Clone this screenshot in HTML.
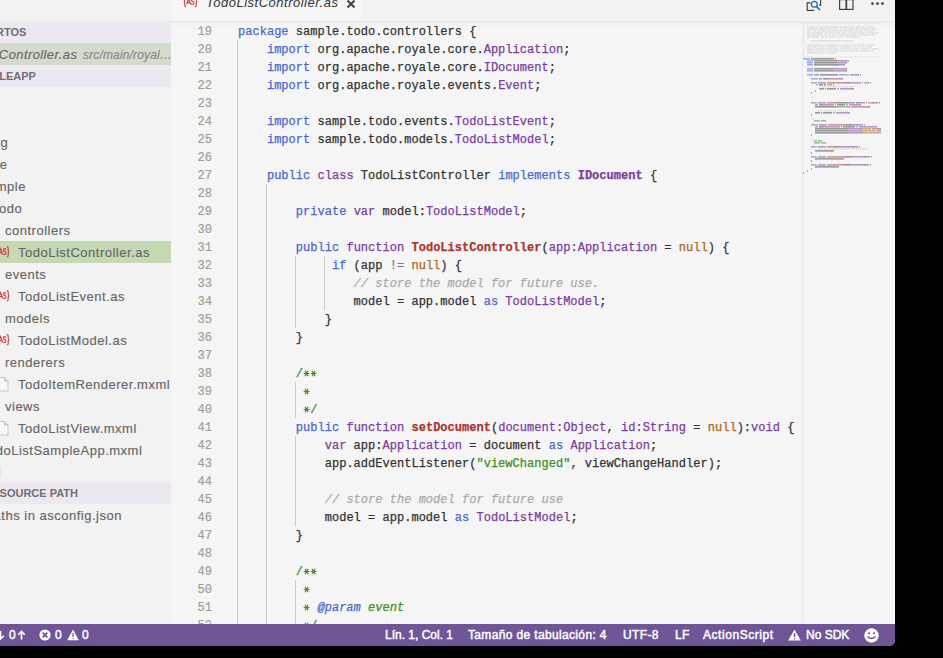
<!DOCTYPE html>
<html><head><meta charset="utf-8">
<style>
*{margin:0;padding:0;box-sizing:border-box}
html,body{width:943px;height:658px;overflow:hidden;background:#000}
body{position:relative;font-family:"Liberation Sans",sans-serif}
#win{position:absolute;left:0;top:0;width:895px;height:646px;background:#f5f5f5;overflow:hidden;border-bottom-right-radius:6px}
#side{position:absolute;left:0;top:0;width:171px;height:624px;background:#f2f2f2;overflow:hidden}
.hdr{position:absolute;left:0;width:171px;height:22px;background:#ede8ef;color:#6f6f6f;font-size:11px;font-weight:bold;line-height:22px;white-space:nowrap}
.hdr span{position:absolute;top:0}
.row{position:absolute;left:0;width:171px;height:22px;line-height:22px;font-size:13px;color:#666666;white-space:nowrap;letter-spacing:0.5px;-webkit-text-stroke:0.15px}
.row span.t{position:absolute;top:1px}
.sel{background:#c4d9b1}
.isel{background:#d3dbcd}
.ic{position:absolute}
#tabs{position:absolute;left:171px;top:0;width:724px;height:21px;background:#f2f2f2}
#tab{position:absolute;left:0;top:0;width:191px;height:21px;background:#f5f5f5}
#tabt{position:absolute;left:35px;top:-6px;font-size:13px;line-height:18px;font-style:italic;color:#333;white-space:nowrap;letter-spacing:0.5px}
#editor{position:absolute;left:171px;top:21px;width:724px;height:603px;background:#f5f5f5;overflow:hidden}
#edshadow{position:absolute;left:171px;top:21px;width:724px;height:8px;box-shadow:#dddddd 0 6px 6px -6px inset}
.ln{position:absolute;left:171px;width:41px;height:18px;line-height:18px;padding-top:1px;text-align:right;font-family:"Liberation Mono",monospace;font-size:12px;color:#9ca096;-webkit-text-stroke:0.2px}
.cl{position:absolute;left:238px;height:18px;line-height:18px;padding-top:1px;white-space:pre;font-family:"Liberation Mono",monospace;font-size:12px;color:#333333;-webkit-text-stroke:0.25px;letter-spacing:0.024px}
.ast{vertical-align:0px}
.ig{position:absolute;width:1px;background:#cacaca}
#mmline{position:absolute;left:802px;top:21px;width:1px;height:603px;background:#eaeaea}
#status{position:absolute;left:0;top:624px;width:895px;height:22px;background:#705697;color:#fff;font-size:12px;line-height:22px;white-space:nowrap;letter-spacing:0.35px;-webkit-text-stroke:0.45px #fff}
#status span{position:absolute;top:0}
#status svg{position:absolute}
#clip{position:absolute;left:0;top:0;width:895px;height:624px;overflow:hidden}
</style></head><body>
<div id="win">
<div id="clip">
<div id="tabs"><div id="tab">
<svg class="ic" style="left:12px;top:-4px" width="15" height="12" viewBox="0 0 15 12" fill="none" stroke="#cf3a42" stroke-width="1.1"><path d="M3.2,0.6 Q1.8,0.6 1.8,2 L1.8,4.6 Q1.8,5.8 0.6,5.8 Q1.8,5.8 1.8,7 L1.8,9.6 Q1.8,11 3.2,11 M3.6,8.4 L5.6,2.6 L7.6,8.4 M4.3,6.6 L6.9,6.6 M11,3.4 Q10.6,2.6 9.6,2.6 Q8.3,2.6 8.3,4 Q8.3,5.1 9.6,5.4 Q11,5.7 11,7 Q11,8.5 9.5,8.5 Q8.5,8.5 8.1,7.7 M11.8,0.6 Q13.2,0.6 13.2,2 L13.2,4.6 Q13.2,5.8 14.4,5.8 Q13.2,5.8 13.2,7 L13.2,9.6 Q13.2,11 11.8,11"/></svg>
<div id="tabt">TodoListController.as</div>
<svg class="ic" style="left:175px;top:-1px" width="10" height="10" viewBox="0 0 10 10" stroke="#424242" stroke-width="2"><path d="M1.5,1.5 L8.5,8.5 M8.5,1.5 L1.5,8.5"/></svg>
</div>
<svg class="ic" style="left:635px;top:-1px" width="16" height="13" viewBox="0 0 16 13" fill="none"><path d="M4.6,3.9 L1.2,3.9 L1.2,11.4 L8.2,11.4 M14.6,0 L14.6,6.2 L13,6.2" stroke="#424242" stroke-width="1.2"/><circle cx="8.3" cy="5.3" r="2.9" stroke="#1a6fc0" stroke-width="1.3"/><path d="M10.4,7.4 L14,11" stroke="#1a6fc0" stroke-width="1.7"/></svg>
<svg class="ic" style="left:668px;top:-1px" width="15" height="12" viewBox="0 0 15 12" fill="none" stroke="#424242" stroke-width="1.2"><rect x="0.6" y="0.6" width="13.4" height="9.8"/><path d="M7.3,0.6 L7.3,10.4" stroke-width="1.8"/></svg>
<svg class="ic" style="left:698px;top:0px" width="16" height="8" viewBox="0 0 16 8" fill="#424242"><circle cx="3.5" cy="3.6" r="1.45"/><circle cx="8.5" cy="3.6" r="1.45"/><circle cx="13.5" cy="3.6" r="1.45"/></svg>
</div>
<div id="editor"></div>
<div id="edshadow"></div>
<div id="mmline"></div>
<svg style="position:absolute;left:803px;top:22px" width="78" height="160" ><rect x="0" y="0" width="80" height="1.6" fill="#AAAAAA" fill-opacity="0.10"/><rect x="0" y="2" width="2" height="1.6" fill="#AAAAAA" fill-opacity="0.10"/><rect x="0" y="4" width="2" height="1.6" fill="#AAAAAA" fill-opacity="0.10"/><rect x="4" y="4" width="8" height="1.6" fill="#AAAAAA" fill-opacity="0.26"/><rect x="13" y="4" width="2" height="1.6" fill="#AAAAAA" fill-opacity="0.26"/><rect x="16" y="4" width="3" height="1.6" fill="#AAAAAA" fill-opacity="0.26"/><rect x="20" y="4" width="6" height="1.6" fill="#AAAAAA" fill-opacity="0.26"/><rect x="27" y="4" width="8" height="1.6" fill="#AAAAAA" fill-opacity="0.26"/><rect x="36" y="4" width="10" height="1.6" fill="#AAAAAA" fill-opacity="0.26"/><rect x="47" y="4" width="5" height="1.6" fill="#AAAAAA" fill-opacity="0.26"/><rect x="53" y="4" width="5" height="1.6" fill="#AAAAAA" fill-opacity="0.26"/><rect x="59" y="4" width="3" height="1.6" fill="#AAAAAA" fill-opacity="0.26"/><rect x="63" y="4" width="2" height="1.6" fill="#AAAAAA" fill-opacity="0.26"/><rect x="66" y="4" width="4" height="1.6" fill="#AAAAAA" fill-opacity="0.26"/><rect x="0" y="6" width="2" height="1.6" fill="#AAAAAA" fill-opacity="0.10"/><rect x="4" y="6" width="11" height="1.6" fill="#AAAAAA" fill-opacity="0.26"/><rect x="16" y="6" width="7" height="1.6" fill="#AAAAAA" fill-opacity="0.26"/><rect x="24" y="6" width="11" height="1.6" fill="#AAAAAA" fill-opacity="0.26"/><rect x="37" y="6" width="3" height="1.6" fill="#AAAAAA" fill-opacity="0.26"/><rect x="41" y="6" width="3" height="1.6" fill="#AAAAAA" fill-opacity="0.26"/><rect x="45" y="6" width="6" height="1.6" fill="#AAAAAA" fill-opacity="0.26"/><rect x="52" y="6" width="4" height="1.6" fill="#AAAAAA" fill-opacity="0.26"/><rect x="57" y="6" width="11" height="1.6" fill="#AAAAAA" fill-opacity="0.26"/><rect x="69" y="6" width="4" height="1.6" fill="#AAAAAA" fill-opacity="0.26"/><rect x="0" y="8" width="2" height="1.6" fill="#AAAAAA" fill-opacity="0.10"/><rect x="4" y="8" width="4" height="1.6" fill="#AAAAAA" fill-opacity="0.26"/><rect x="9" y="8" width="4" height="1.6" fill="#AAAAAA" fill-opacity="0.26"/><rect x="14" y="8" width="3" height="1.6" fill="#AAAAAA" fill-opacity="0.26"/><rect x="18" y="8" width="10" height="1.6" fill="#AAAAAA" fill-opacity="0.26"/><rect x="29" y="8" width="11" height="1.6" fill="#AAAAAA" fill-opacity="0.26"/><rect x="41" y="8" width="9" height="1.6" fill="#AAAAAA" fill-opacity="0.26"/><rect x="51" y="8" width="9" height="1.6" fill="#AAAAAA" fill-opacity="0.26"/><rect x="61" y="8" width="10" height="1.6" fill="#AAAAAA" fill-opacity="0.26"/><rect x="0" y="10" width="2" height="1.6" fill="#AAAAAA" fill-opacity="0.10"/><rect x="4" y="10" width="3" height="1.6" fill="#AAAAAA" fill-opacity="0.26"/><rect x="8" y="10" width="3" height="1.6" fill="#AAAAAA" fill-opacity="0.26"/><rect x="12" y="10" width="8" height="1.6" fill="#AAAAAA" fill-opacity="0.26"/><rect x="21" y="10" width="4" height="1.6" fill="#AAAAAA" fill-opacity="0.26"/><rect x="26" y="10" width="4" height="1.6" fill="#AAAAAA" fill-opacity="0.26"/><rect x="31" y="10" width="2" height="1.6" fill="#AAAAAA" fill-opacity="0.26"/><rect x="34" y="10" width="3" height="1.6" fill="#AAAAAA" fill-opacity="0.26"/><rect x="38" y="10" width="5" height="1.6" fill="#AAAAAA" fill-opacity="0.26"/><rect x="44" y="10" width="3" height="1.6" fill="#AAAAAA" fill-opacity="0.26"/><rect x="48" y="10" width="6" height="1.6" fill="#AAAAAA" fill-opacity="0.26"/><rect x="55" y="10" width="8" height="1.6" fill="#AAAAAA" fill-opacity="0.26"/><rect x="64" y="10" width="7" height="1.6" fill="#AAAAAA" fill-opacity="0.26"/><rect x="72" y="10" width="3" height="1.6" fill="#AAAAAA" fill-opacity="0.26"/><rect x="0" y="12" width="2" height="1.6" fill="#AAAAAA" fill-opacity="0.10"/><rect x="4" y="12" width="4" height="1.6" fill="#AAAAAA" fill-opacity="0.26"/><rect x="9" y="12" width="11" height="1.6" fill="#AAAAAA" fill-opacity="0.26"/><rect x="21" y="12" width="3" height="1.6" fill="#AAAAAA" fill-opacity="0.26"/><rect x="25" y="12" width="3" height="1.6" fill="#AAAAAA" fill-opacity="0.26"/><rect x="29" y="12" width="3" height="1.6" fill="#AAAAAA" fill-opacity="0.26"/><rect x="33" y="12" width="3" height="1.6" fill="#AAAAAA" fill-opacity="0.26"/><rect x="37" y="12" width="4" height="1.6" fill="#AAAAAA" fill-opacity="0.26"/><rect x="42" y="12" width="4" height="1.6" fill="#AAAAAA" fill-opacity="0.26"/><rect x="47" y="12" width="6" height="1.6" fill="#AAAAAA" fill-opacity="0.26"/><rect x="54" y="12" width="2" height="1.6" fill="#AAAAAA" fill-opacity="0.26"/><rect x="57" y="12" width="10" height="1.6" fill="#AAAAAA" fill-opacity="0.26"/><rect x="68" y="12" width="4" height="1.6" fill="#AAAAAA" fill-opacity="0.26"/><rect x="0" y="14" width="2" height="1.6" fill="#AAAAAA" fill-opacity="0.10"/><rect x="4" y="14" width="3" height="1.6" fill="#AAAAAA" fill-opacity="0.26"/><rect x="8" y="14" width="8" height="1.6" fill="#AAAAAA" fill-opacity="0.26"/><rect x="18" y="14" width="3" height="1.6" fill="#AAAAAA" fill-opacity="0.26"/><rect x="22" y="14" width="3" height="1.6" fill="#AAAAAA" fill-opacity="0.26"/><rect x="26" y="14" width="6" height="1.6" fill="#AAAAAA" fill-opacity="0.26"/><rect x="33" y="14" width="1" height="1.6" fill="#AAAAAA" fill-opacity="0.26"/><rect x="35" y="14" width="4" height="1.6" fill="#AAAAAA" fill-opacity="0.26"/><rect x="40" y="14" width="2" height="1.6" fill="#AAAAAA" fill-opacity="0.26"/><rect x="43" y="14" width="3" height="1.6" fill="#AAAAAA" fill-opacity="0.26"/><rect x="47" y="14" width="7" height="1.6" fill="#AAAAAA" fill-opacity="0.26"/><rect x="55" y="14" width="2" height="1.6" fill="#AAAAAA" fill-opacity="0.26"/><rect x="0" y="16" width="2" height="1.6" fill="#AAAAAA" fill-opacity="0.10"/><rect x="0" y="18" width="2" height="1.6" fill="#AAAAAA" fill-opacity="0.10"/><rect x="8" y="18" width="42" height="1.6" fill="#AAAAAA" fill-opacity="0.26"/><rect x="0" y="20" width="2" height="1.6" fill="#AAAAAA" fill-opacity="0.10"/><rect x="0" y="22" width="2" height="1.6" fill="#AAAAAA" fill-opacity="0.10"/><rect x="4" y="22" width="6" height="1.6" fill="#AAAAAA" fill-opacity="0.26"/><rect x="11" y="22" width="8" height="1.6" fill="#AAAAAA" fill-opacity="0.26"/><rect x="20" y="22" width="2" height="1.6" fill="#AAAAAA" fill-opacity="0.26"/><rect x="23" y="22" width="10" height="1.6" fill="#AAAAAA" fill-opacity="0.26"/><rect x="34" y="22" width="3" height="1.6" fill="#AAAAAA" fill-opacity="0.26"/><rect x="38" y="22" width="2" height="1.6" fill="#AAAAAA" fill-opacity="0.26"/><rect x="41" y="22" width="6" height="1.6" fill="#AAAAAA" fill-opacity="0.26"/><rect x="48" y="22" width="2" height="1.6" fill="#AAAAAA" fill-opacity="0.26"/><rect x="51" y="22" width="2" height="1.6" fill="#AAAAAA" fill-opacity="0.26"/><rect x="54" y="22" width="8" height="1.6" fill="#AAAAAA" fill-opacity="0.26"/><rect x="63" y="22" width="8" height="1.6" fill="#AAAAAA" fill-opacity="0.26"/><rect x="0" y="24" width="2" height="1.6" fill="#AAAAAA" fill-opacity="0.10"/><rect x="4" y="24" width="11" height="1.6" fill="#AAAAAA" fill-opacity="0.26"/><rect x="16" y="24" width="5" height="1.6" fill="#AAAAAA" fill-opacity="0.26"/><rect x="22" y="24" width="3" height="1.6" fill="#AAAAAA" fill-opacity="0.26"/><rect x="26" y="24" width="7" height="1.6" fill="#AAAAAA" fill-opacity="0.26"/><rect x="34" y="24" width="2" height="1.6" fill="#AAAAAA" fill-opacity="0.26"/><rect x="37" y="24" width="11" height="1.6" fill="#AAAAAA" fill-opacity="0.26"/><rect x="49" y="24" width="2" height="1.6" fill="#AAAAAA" fill-opacity="0.26"/><rect x="52" y="24" width="2" height="1.6" fill="#AAAAAA" fill-opacity="0.26"/><rect x="55" y="24" width="3" height="1.6" fill="#AAAAAA" fill-opacity="0.26"/><rect x="59" y="24" width="3" height="1.6" fill="#AAAAAA" fill-opacity="0.26"/><rect x="63" y="24" width="6" height="1.6" fill="#AAAAAA" fill-opacity="0.26"/><rect x="0" y="26" width="2" height="1.6" fill="#AAAAAA" fill-opacity="0.10"/><rect x="4" y="26" width="7" height="1.6" fill="#AAAAAA" fill-opacity="0.26"/><rect x="12" y="26" width="10" height="1.6" fill="#AAAAAA" fill-opacity="0.26"/><rect x="23" y="26" width="2" height="1.6" fill="#AAAAAA" fill-opacity="0.26"/><rect x="26" y="26" width="10" height="1.6" fill="#AAAAAA" fill-opacity="0.26"/><rect x="37" y="26" width="2" height="1.6" fill="#AAAAAA" fill-opacity="0.26"/><rect x="40" y="26" width="3" height="1.6" fill="#AAAAAA" fill-opacity="0.26"/><rect x="44" y="26" width="5" height="1.6" fill="#AAAAAA" fill-opacity="0.26"/><rect x="50" y="26" width="6" height="1.6" fill="#AAAAAA" fill-opacity="0.26"/><rect x="57" y="26" width="7" height="1.6" fill="#AAAAAA" fill-opacity="0.26"/><rect x="65" y="26" width="2" height="1.6" fill="#AAAAAA" fill-opacity="0.26"/><rect x="68" y="26" width="8" height="1.6" fill="#AAAAAA" fill-opacity="0.26"/><rect x="0" y="28" width="2" height="1.6" fill="#AAAAAA" fill-opacity="0.10"/><rect x="4" y="28" width="3" height="1.6" fill="#AAAAAA" fill-opacity="0.26"/><rect x="8" y="28" width="3" height="1.6" fill="#AAAAAA" fill-opacity="0.26"/><rect x="12" y="28" width="7" height="1.6" fill="#AAAAAA" fill-opacity="0.26"/><rect x="20" y="28" width="3" height="1.6" fill="#AAAAAA" fill-opacity="0.26"/><rect x="24" y="28" width="3" height="1.6" fill="#AAAAAA" fill-opacity="0.26"/><rect x="28" y="28" width="8" height="1.6" fill="#AAAAAA" fill-opacity="0.26"/><rect x="37" y="28" width="8" height="1.6" fill="#AAAAAA" fill-opacity="0.26"/><rect x="46" y="28" width="9" height="1.6" fill="#AAAAAA" fill-opacity="0.26"/><rect x="56" y="28" width="11" height="1.6" fill="#AAAAAA" fill-opacity="0.26"/><rect x="68" y="28" width="3" height="1.6" fill="#AAAAAA" fill-opacity="0.26"/><rect x="0" y="30" width="2" height="1.6" fill="#AAAAAA" fill-opacity="0.10"/><rect x="4" y="30" width="11" height="1.6" fill="#AAAAAA" fill-opacity="0.26"/><rect x="16" y="30" width="5" height="1.6" fill="#AAAAAA" fill-opacity="0.26"/><rect x="22" y="30" width="3" height="1.6" fill="#AAAAAA" fill-opacity="0.26"/><rect x="26" y="30" width="8" height="1.6" fill="#AAAAAA" fill-opacity="0.26"/><rect x="0" y="32" width="2" height="1.6" fill="#AAAAAA" fill-opacity="0.10"/><rect x="0" y="34" width="80" height="1.6" fill="#AAAAAA" fill-opacity="0.10"/><rect x="0" y="36" width="7" height="1.6" fill="#4B69C6" fill-opacity="0.50"/><rect x="8" y="36" width="6" height="1.6" fill="#333333" fill-opacity="0.48"/><rect x="14" y="36" width="1" height="1.6" fill="#333333" fill-opacity="0.48"/><rect x="15" y="36" width="4" height="1.6" fill="#333333" fill-opacity="0.48"/><rect x="19" y="36" width="1" height="1.6" fill="#333333" fill-opacity="0.48"/><rect x="20" y="36" width="11" height="1.6" fill="#333333" fill-opacity="0.48"/><rect x="32" y="36" width="1" height="1.6" fill="#333333" fill-opacity="0.48"/><rect x="4" y="38" width="6" height="1.6" fill="#4B69C6" fill-opacity="0.50"/><rect x="11" y="38" width="3" height="1.6" fill="#333333" fill-opacity="0.48"/><rect x="14" y="38" width="1" height="1.6" fill="#333333" fill-opacity="0.48"/><rect x="15" y="38" width="6" height="1.6" fill="#333333" fill-opacity="0.48"/><rect x="21" y="38" width="1" height="1.6" fill="#333333" fill-opacity="0.48"/><rect x="22" y="38" width="6" height="1.6" fill="#333333" fill-opacity="0.48"/><rect x="28" y="38" width="1" height="1.6" fill="#333333" fill-opacity="0.48"/><rect x="29" y="38" width="4" height="1.6" fill="#333333" fill-opacity="0.48"/><rect x="33" y="38" width="1" height="1.6" fill="#333333" fill-opacity="0.48"/><rect x="34" y="38" width="11" height="1.6" fill="#7A3E9D" fill-opacity="0.50"/><rect x="45" y="38" width="1" height="1.6" fill="#333333" fill-opacity="0.48"/><rect x="4" y="40" width="6" height="1.6" fill="#4B69C6" fill-opacity="0.50"/><rect x="11" y="40" width="3" height="1.6" fill="#333333" fill-opacity="0.48"/><rect x="14" y="40" width="1" height="1.6" fill="#333333" fill-opacity="0.48"/><rect x="15" y="40" width="6" height="1.6" fill="#333333" fill-opacity="0.48"/><rect x="21" y="40" width="1" height="1.6" fill="#333333" fill-opacity="0.48"/><rect x="22" y="40" width="6" height="1.6" fill="#333333" fill-opacity="0.48"/><rect x="28" y="40" width="1" height="1.6" fill="#333333" fill-opacity="0.48"/><rect x="29" y="40" width="4" height="1.6" fill="#333333" fill-opacity="0.48"/><rect x="33" y="40" width="1" height="1.6" fill="#333333" fill-opacity="0.48"/><rect x="34" y="40" width="9" height="1.6" fill="#7A3E9D" fill-opacity="0.50"/><rect x="43" y="40" width="1" height="1.6" fill="#333333" fill-opacity="0.48"/><rect x="4" y="42" width="6" height="1.6" fill="#4B69C6" fill-opacity="0.50"/><rect x="11" y="42" width="3" height="1.6" fill="#333333" fill-opacity="0.48"/><rect x="14" y="42" width="1" height="1.6" fill="#333333" fill-opacity="0.48"/><rect x="15" y="42" width="6" height="1.6" fill="#333333" fill-opacity="0.48"/><rect x="21" y="42" width="1" height="1.6" fill="#333333" fill-opacity="0.48"/><rect x="22" y="42" width="6" height="1.6" fill="#333333" fill-opacity="0.48"/><rect x="28" y="42" width="1" height="1.6" fill="#333333" fill-opacity="0.48"/><rect x="29" y="42" width="6" height="1.6" fill="#333333" fill-opacity="0.48"/><rect x="35" y="42" width="1" height="1.6" fill="#333333" fill-opacity="0.48"/><rect x="36" y="42" width="5" height="1.6" fill="#7A3E9D" fill-opacity="0.50"/><rect x="41" y="42" width="1" height="1.6" fill="#333333" fill-opacity="0.48"/><rect x="4" y="46" width="6" height="1.6" fill="#4B69C6" fill-opacity="0.50"/><rect x="11" y="46" width="6" height="1.6" fill="#333333" fill-opacity="0.48"/><rect x="17" y="46" width="1" height="1.6" fill="#333333" fill-opacity="0.48"/><rect x="18" y="46" width="4" height="1.6" fill="#333333" fill-opacity="0.48"/><rect x="22" y="46" width="1" height="1.6" fill="#333333" fill-opacity="0.48"/><rect x="23" y="46" width="6" height="1.6" fill="#333333" fill-opacity="0.48"/><rect x="29" y="46" width="1" height="1.6" fill="#333333" fill-opacity="0.48"/><rect x="30" y="46" width="13" height="1.6" fill="#7A3E9D" fill-opacity="0.50"/><rect x="43" y="46" width="1" height="1.6" fill="#333333" fill-opacity="0.48"/><rect x="4" y="48" width="6" height="1.6" fill="#4B69C6" fill-opacity="0.50"/><rect x="11" y="48" width="6" height="1.6" fill="#333333" fill-opacity="0.48"/><rect x="17" y="48" width="1" height="1.6" fill="#333333" fill-opacity="0.48"/><rect x="18" y="48" width="4" height="1.6" fill="#333333" fill-opacity="0.48"/><rect x="22" y="48" width="1" height="1.6" fill="#333333" fill-opacity="0.48"/><rect x="23" y="48" width="6" height="1.6" fill="#333333" fill-opacity="0.48"/><rect x="29" y="48" width="1" height="1.6" fill="#333333" fill-opacity="0.48"/><rect x="30" y="48" width="13" height="1.6" fill="#7A3E9D" fill-opacity="0.50"/><rect x="43" y="48" width="1" height="1.6" fill="#333333" fill-opacity="0.48"/><rect x="4" y="52" width="6" height="1.6" fill="#4B69C6" fill-opacity="0.50"/><rect x="11" y="52" width="5" height="1.6" fill="#7A3E9D" fill-opacity="0.50"/><rect x="17" y="52" width="18" height="1.6" fill="#333333" fill-opacity="0.48"/><rect x="36" y="52" width="10" height="1.6" fill="#4B69C6" fill-opacity="0.50"/><rect x="47" y="52" width="9" height="1.6" fill="#7A3E9D" fill-opacity="0.50"/><rect x="57" y="52" width="1" height="1.6" fill="#333333" fill-opacity="0.48"/><rect x="8" y="56" width="7" height="1.6" fill="#4B69C6" fill-opacity="0.50"/><rect x="16" y="56" width="3" height="1.6" fill="#7A3E9D" fill-opacity="0.50"/><rect x="20" y="56" width="5" height="1.6" fill="#333333" fill-opacity="0.48"/><rect x="25" y="56" width="1" height="1.6" fill="#333333" fill-opacity="0.48"/><rect x="26" y="56" width="13" height="1.6" fill="#7A3E9D" fill-opacity="0.50"/><rect x="39" y="56" width="1" height="1.6" fill="#333333" fill-opacity="0.48"/><rect x="8" y="60" width="6" height="1.6" fill="#4B69C6" fill-opacity="0.50"/><rect x="15" y="60" width="8" height="1.6" fill="#7A3E9D" fill-opacity="0.50"/><rect x="24" y="60" width="18" height="1.6" fill="#AA3731" fill-opacity="0.50"/><rect x="42" y="60" width="1" height="1.6" fill="#333333" fill-opacity="0.48"/><rect x="43" y="60" width="3" height="1.6" fill="#333333" fill-opacity="0.48"/><rect x="46" y="60" width="1" height="1.6" fill="#333333" fill-opacity="0.48"/><rect x="47" y="60" width="11" height="1.6" fill="#7A3E9D" fill-opacity="0.50"/><rect x="59" y="60" width="1" height="1.6" fill="#333333" fill-opacity="0.48"/><rect x="61" y="60" width="4" height="1.6" fill="#AB6526" fill-opacity="0.50"/><rect x="65" y="60" width="1" height="1.6" fill="#333333" fill-opacity="0.48"/><rect x="67" y="60" width="1" height="1.6" fill="#333333" fill-opacity="0.48"/><rect x="13" y="62" width="2" height="1.6" fill="#4B69C6" fill-opacity="0.50"/><rect x="16" y="62" width="1" height="1.6" fill="#333333" fill-opacity="0.48"/><rect x="17" y="62" width="3" height="1.6" fill="#333333" fill-opacity="0.48"/><rect x="21" y="62" width="1" height="1.6" fill="#333333" fill-opacity="0.48"/><rect x="22" y="62" width="1" height="1.6" fill="#333333" fill-opacity="0.48"/><rect x="24" y="62" width="4" height="1.6" fill="#AB6526" fill-opacity="0.50"/><rect x="28" y="62" width="1" height="1.6" fill="#333333" fill-opacity="0.48"/><rect x="30" y="62" width="1" height="1.6" fill="#333333" fill-opacity="0.48"/><rect x="16" y="64" width="2" height="1.6" fill="#AAAAAA" fill-opacity="0.10"/><rect x="19" y="64" width="5" height="1.6" fill="#AAAAAA" fill-opacity="0.26"/><rect x="25" y="64" width="3" height="1.6" fill="#AAAAAA" fill-opacity="0.26"/><rect x="29" y="64" width="5" height="1.6" fill="#AAAAAA" fill-opacity="0.26"/><rect x="35" y="64" width="3" height="1.6" fill="#AAAAAA" fill-opacity="0.26"/><rect x="39" y="64" width="6" height="1.6" fill="#AAAAAA" fill-opacity="0.26"/><rect x="46" y="64" width="4" height="1.6" fill="#AAAAAA" fill-opacity="0.26"/><rect x="16" y="66" width="5" height="1.6" fill="#333333" fill-opacity="0.48"/><rect x="22" y="66" width="1" height="1.6" fill="#333333" fill-opacity="0.48"/><rect x="24" y="66" width="3" height="1.6" fill="#333333" fill-opacity="0.48"/><rect x="27" y="66" width="1" height="1.6" fill="#333333" fill-opacity="0.48"/><rect x="28" y="66" width="5" height="1.6" fill="#333333" fill-opacity="0.48"/><rect x="34" y="66" width="2" height="1.6" fill="#4B69C6" fill-opacity="0.50"/><rect x="37" y="66" width="13" height="1.6" fill="#7A3E9D" fill-opacity="0.50"/><rect x="50" y="66" width="1" height="1.6" fill="#333333" fill-opacity="0.48"/><rect x="12" y="68" width="1" height="1.6" fill="#333333" fill-opacity="0.48"/><rect x="8" y="70" width="1" height="1.6" fill="#333333" fill-opacity="0.48"/><rect x="8" y="74" width="3" height="1.6" fill="#448C27" fill-opacity="0.10"/><rect x="9" y="76" width="1" height="1.6" fill="#448C27" fill-opacity="0.10"/><rect x="9" y="78" width="2" height="1.6" fill="#448C27" fill-opacity="0.10"/><rect x="8" y="80" width="6" height="1.6" fill="#4B69C6" fill-opacity="0.50"/><rect x="15" y="80" width="8" height="1.6" fill="#7A3E9D" fill-opacity="0.50"/><rect x="24" y="80" width="11" height="1.6" fill="#AA3731" fill-opacity="0.50"/><rect x="35" y="80" width="1" height="1.6" fill="#333333" fill-opacity="0.48"/><rect x="36" y="80" width="8" height="1.6" fill="#333333" fill-opacity="0.48"/><rect x="44" y="80" width="1" height="1.6" fill="#333333" fill-opacity="0.48"/><rect x="45" y="80" width="6" height="1.6" fill="#7A3E9D" fill-opacity="0.50"/><rect x="51" y="80" width="1" height="1.6" fill="#333333" fill-opacity="0.48"/><rect x="53" y="80" width="2" height="1.6" fill="#333333" fill-opacity="0.48"/><rect x="55" y="80" width="1" height="1.6" fill="#333333" fill-opacity="0.48"/><rect x="56" y="80" width="6" height="1.6" fill="#7A3E9D" fill-opacity="0.50"/><rect x="63" y="80" width="1" height="1.6" fill="#333333" fill-opacity="0.48"/><rect x="65" y="80" width="4" height="1.6" fill="#AB6526" fill-opacity="0.50"/><rect x="69" y="80" width="1" height="1.6" fill="#333333" fill-opacity="0.48"/><rect x="70" y="80" width="1" height="1.6" fill="#333333" fill-opacity="0.48"/><rect x="71" y="80" width="4" height="1.6" fill="#7A3E9D" fill-opacity="0.50"/><rect x="76" y="80" width="1" height="1.6" fill="#333333" fill-opacity="0.48"/><rect x="12" y="82" width="3" height="1.6" fill="#7A3E9D" fill-opacity="0.50"/><rect x="16" y="82" width="3" height="1.6" fill="#333333" fill-opacity="0.48"/><rect x="19" y="82" width="1" height="1.6" fill="#333333" fill-opacity="0.48"/><rect x="20" y="82" width="11" height="1.6" fill="#7A3E9D" fill-opacity="0.50"/><rect x="32" y="82" width="1" height="1.6" fill="#333333" fill-opacity="0.48"/><rect x="34" y="82" width="8" height="1.6" fill="#333333" fill-opacity="0.48"/><rect x="43" y="82" width="2" height="1.6" fill="#4B69C6" fill-opacity="0.50"/><rect x="46" y="82" width="11" height="1.6" fill="#7A3E9D" fill-opacity="0.50"/><rect x="57" y="82" width="1" height="1.6" fill="#333333" fill-opacity="0.48"/><rect x="12" y="84" width="3" height="1.6" fill="#333333" fill-opacity="0.48"/><rect x="15" y="84" width="1" height="1.6" fill="#333333" fill-opacity="0.48"/><rect x="16" y="84" width="16" height="1.6" fill="#333333" fill-opacity="0.48"/><rect x="32" y="84" width="1" height="1.6" fill="#333333" fill-opacity="0.48"/><rect x="33" y="84" width="13" height="1.6" fill="#448C27" fill-opacity="0.50"/><rect x="46" y="84" width="1" height="1.6" fill="#333333" fill-opacity="0.48"/><rect x="48" y="84" width="17" height="1.6" fill="#AA3731" fill-opacity="0.50"/><rect x="65" y="84" width="1" height="1.6" fill="#333333" fill-opacity="0.48"/><rect x="66" y="84" width="1" height="1.6" fill="#333333" fill-opacity="0.48"/><rect x="12" y="88" width="2" height="1.6" fill="#AAAAAA" fill-opacity="0.10"/><rect x="15" y="88" width="5" height="1.6" fill="#AAAAAA" fill-opacity="0.26"/><rect x="21" y="88" width="3" height="1.6" fill="#AAAAAA" fill-opacity="0.26"/><rect x="25" y="88" width="5" height="1.6" fill="#AAAAAA" fill-opacity="0.26"/><rect x="31" y="88" width="3" height="1.6" fill="#AAAAAA" fill-opacity="0.26"/><rect x="35" y="88" width="6" height="1.6" fill="#AAAAAA" fill-opacity="0.26"/><rect x="42" y="88" width="3" height="1.6" fill="#AAAAAA" fill-opacity="0.26"/><rect x="12" y="90" width="5" height="1.6" fill="#333333" fill-opacity="0.48"/><rect x="18" y="90" width="1" height="1.6" fill="#333333" fill-opacity="0.48"/><rect x="20" y="90" width="3" height="1.6" fill="#333333" fill-opacity="0.48"/><rect x="23" y="90" width="1" height="1.6" fill="#333333" fill-opacity="0.48"/><rect x="24" y="90" width="5" height="1.6" fill="#333333" fill-opacity="0.48"/><rect x="30" y="90" width="2" height="1.6" fill="#4B69C6" fill-opacity="0.50"/><rect x="33" y="90" width="13" height="1.6" fill="#7A3E9D" fill-opacity="0.50"/><rect x="46" y="90" width="1" height="1.6" fill="#333333" fill-opacity="0.48"/><rect x="8" y="92" width="1" height="1.6" fill="#333333" fill-opacity="0.48"/><rect x="8" y="96" width="3" height="1.6" fill="#448C27" fill-opacity="0.10"/><rect x="9" y="98" width="1" height="1.6" fill="#448C27" fill-opacity="0.10"/><rect x="11" y="98" width="6" height="1.6" fill="#448C27" fill-opacity="0.50"/><rect x="18" y="98" width="5" height="1.6" fill="#448C27" fill-opacity="0.50"/><rect x="9" y="100" width="2" height="1.6" fill="#448C27" fill-opacity="0.10"/><rect x="8" y="102" width="7" height="1.6" fill="#4B69C6" fill-opacity="0.50"/><rect x="16" y="102" width="8" height="1.6" fill="#7A3E9D" fill-opacity="0.50"/><rect x="25" y="102" width="17" height="1.6" fill="#AA3731" fill-opacity="0.50"/><rect x="42" y="102" width="1" height="1.6" fill="#333333" fill-opacity="0.48"/><rect x="43" y="102" width="5" height="1.6" fill="#333333" fill-opacity="0.48"/><rect x="48" y="102" width="1" height="1.6" fill="#333333" fill-opacity="0.48"/><rect x="49" y="102" width="5" height="1.6" fill="#7A3E9D" fill-opacity="0.50"/><rect x="54" y="102" width="1" height="1.6" fill="#333333" fill-opacity="0.48"/><rect x="55" y="102" width="1" height="1.6" fill="#333333" fill-opacity="0.48"/><rect x="56" y="102" width="4" height="1.6" fill="#7A3E9D" fill-opacity="0.50"/><rect x="61" y="102" width="1" height="1.6" fill="#333333" fill-opacity="0.48"/><rect x="12" y="104" width="3" height="1.6" fill="#7A3E9D" fill-opacity="0.50"/><rect x="16" y="104" width="3" height="1.6" fill="#333333" fill-opacity="0.48"/><rect x="19" y="104" width="1" height="1.6" fill="#333333" fill-opacity="0.48"/><rect x="20" y="104" width="17" height="1.6" fill="#7A3E9D" fill-opacity="0.50"/><rect x="38" y="104" width="1" height="1.6" fill="#333333" fill-opacity="0.48"/><rect x="40" y="104" width="5" height="1.6" fill="#333333" fill-opacity="0.48"/><rect x="45" y="104" width="1" height="1.6" fill="#333333" fill-opacity="0.48"/><rect x="46" y="104" width="6" height="1.6" fill="#333333" fill-opacity="0.48"/><rect x="53" y="104" width="2" height="1.6" fill="#4B69C6" fill-opacity="0.50"/><rect x="56" y="104" width="17" height="1.6" fill="#7A3E9D" fill-opacity="0.50"/><rect x="73" y="104" width="1" height="1.6" fill="#333333" fill-opacity="0.48"/><rect x="12" y="106" width="3" height="1.6" fill="#333333" fill-opacity="0.48"/><rect x="15" y="106" width="1" height="1.6" fill="#333333" fill-opacity="0.48"/><rect x="16" y="106" width="11" height="1.6" fill="#333333" fill-opacity="0.48"/><rect x="27" y="106" width="1" height="1.6" fill="#333333" fill-opacity="0.48"/><rect x="28" y="106" width="16" height="1.6" fill="#333333" fill-opacity="0.48"/><rect x="44" y="106" width="1" height="1.6" fill="#333333" fill-opacity="0.48"/><rect x="45" y="106" width="13" height="1.6" fill="#7A3E9D" fill-opacity="0.50"/><rect x="58" y="106" width="1" height="1.6" fill="#333333" fill-opacity="0.48"/><rect x="59" y="106" width="8" height="1.6" fill="#AB6526" fill-opacity="0.50"/><rect x="67" y="106" width="1" height="1.6" fill="#333333" fill-opacity="0.48"/><rect x="69" y="106" width="7" height="1.6" fill="#AA3731" fill-opacity="0.50"/><rect x="76" y="106" width="1" height="1.6" fill="#333333" fill-opacity="0.48"/><rect x="77" y="106" width="1" height="1.6" fill="#333333" fill-opacity="0.48"/><rect x="12" y="108" width="3" height="1.6" fill="#333333" fill-opacity="0.48"/><rect x="15" y="108" width="1" height="1.6" fill="#333333" fill-opacity="0.48"/><rect x="16" y="108" width="11" height="1.6" fill="#333333" fill-opacity="0.48"/><rect x="27" y="108" width="1" height="1.6" fill="#333333" fill-opacity="0.48"/><rect x="28" y="108" width="16" height="1.6" fill="#333333" fill-opacity="0.48"/><rect x="44" y="108" width="1" height="1.6" fill="#333333" fill-opacity="0.48"/><rect x="45" y="108" width="13" height="1.6" fill="#7A3E9D" fill-opacity="0.50"/><rect x="58" y="108" width="1" height="1.6" fill="#333333" fill-opacity="0.48"/><rect x="59" y="108" width="12" height="1.6" fill="#AB6526" fill-opacity="0.50"/><rect x="71" y="108" width="1" height="1.6" fill="#333333" fill-opacity="0.48"/><rect x="73" y="108" width="17" height="1.6" fill="#AA3731" fill-opacity="0.50"/><rect x="90" y="108" width="1" height="1.6" fill="#333333" fill-opacity="0.48"/><rect x="91" y="108" width="1" height="1.6" fill="#333333" fill-opacity="0.48"/><rect x="12" y="110" width="3" height="1.6" fill="#333333" fill-opacity="0.48"/><rect x="15" y="110" width="1" height="1.6" fill="#333333" fill-opacity="0.48"/><rect x="16" y="110" width="11" height="1.6" fill="#333333" fill-opacity="0.48"/><rect x="27" y="110" width="1" height="1.6" fill="#333333" fill-opacity="0.48"/><rect x="28" y="110" width="16" height="1.6" fill="#333333" fill-opacity="0.48"/><rect x="44" y="110" width="1" height="1.6" fill="#333333" fill-opacity="0.48"/><rect x="45" y="110" width="13" height="1.6" fill="#7A3E9D" fill-opacity="0.50"/><rect x="58" y="110" width="1" height="1.6" fill="#333333" fill-opacity="0.48"/><rect x="59" y="110" width="19" height="1.6" fill="#AB6526" fill-opacity="0.50"/><rect x="78" y="110" width="1" height="1.6" fill="#333333" fill-opacity="0.48"/><rect x="80" y="110" width="16" height="1.6" fill="#AA3731" fill-opacity="0.50"/><rect x="96" y="110" width="1" height="1.6" fill="#333333" fill-opacity="0.48"/><rect x="97" y="110" width="1" height="1.6" fill="#333333" fill-opacity="0.48"/><rect x="8" y="112" width="1" height="1.6" fill="#333333" fill-opacity="0.48"/><rect x="8" y="116" width="3" height="1.6" fill="#448C27" fill-opacity="0.10"/><rect x="9" y="118" width="1" height="1.6" fill="#448C27" fill-opacity="0.10"/><rect x="11" y="118" width="3" height="1.6" fill="#448C27" fill-opacity="0.50"/><rect x="15" y="118" width="4" height="1.6" fill="#448C27" fill-opacity="0.50"/><rect x="9" y="120" width="1" height="1.6" fill="#448C27" fill-opacity="0.10"/><rect x="11" y="120" width="6" height="1.6" fill="#448C27" fill-opacity="0.50"/><rect x="18" y="120" width="5" height="1.6" fill="#448C27" fill-opacity="0.50"/><rect x="9" y="122" width="2" height="1.6" fill="#448C27" fill-opacity="0.10"/><rect x="8" y="124" width="6" height="1.6" fill="#4B69C6" fill-opacity="0.50"/><rect x="15" y="124" width="8" height="1.6" fill="#7A3E9D" fill-opacity="0.50"/><rect x="24" y="124" width="7" height="1.6" fill="#AA3731" fill-opacity="0.50"/><rect x="31" y="124" width="1" height="1.6" fill="#333333" fill-opacity="0.48"/><rect x="32" y="124" width="3" height="1.6" fill="#333333" fill-opacity="0.48"/><rect x="35" y="124" width="1" height="1.6" fill="#333333" fill-opacity="0.48"/><rect x="36" y="124" width="13" height="1.6" fill="#7A3E9D" fill-opacity="0.50"/><rect x="49" y="124" width="1" height="1.6" fill="#333333" fill-opacity="0.48"/><rect x="50" y="124" width="1" height="1.6" fill="#333333" fill-opacity="0.48"/><rect x="51" y="124" width="4" height="1.6" fill="#7A3E9D" fill-opacity="0.50"/><rect x="56" y="124" width="1" height="1.6" fill="#333333" fill-opacity="0.48"/><rect x="12" y="126" width="2" height="1.6" fill="#AAAAAA" fill-opacity="0.10"/><rect x="15" y="126" width="5" height="1.6" fill="#AAAAAA" fill-opacity="0.26"/><rect x="21" y="126" width="4" height="1.6" fill="#AAAAAA" fill-opacity="0.26"/><rect x="26" y="126" width="2" height="1.6" fill="#AAAAAA" fill-opacity="0.26"/><rect x="29" y="126" width="6" height="1.6" fill="#AAAAAA" fill-opacity="0.26"/><rect x="36" y="126" width="5" height="1.6" fill="#AAAAAA" fill-opacity="0.26"/><rect x="42" y="126" width="1" height="1.6" fill="#AAAAAA" fill-opacity="0.26"/><rect x="44" y="126" width="4" height="1.6" fill="#AAAAAA" fill-opacity="0.26"/><rect x="49" y="126" width="3" height="1.6" fill="#AAAAAA" fill-opacity="0.26"/><rect x="53" y="126" width="3" height="1.6" fill="#AAAAAA" fill-opacity="0.26"/><rect x="57" y="126" width="7" height="1.6" fill="#AAAAAA" fill-opacity="0.26"/><rect x="12" y="128" width="5" height="1.6" fill="#333333" fill-opacity="0.48"/><rect x="17" y="128" width="1" height="1.6" fill="#333333" fill-opacity="0.48"/><rect x="18" y="128" width="7" height="1.6" fill="#333333" fill-opacity="0.48"/><rect x="25" y="128" width="1" height="1.6" fill="#333333" fill-opacity="0.48"/><rect x="26" y="128" width="3" height="1.6" fill="#333333" fill-opacity="0.48"/><rect x="29" y="128" width="1" height="1.6" fill="#333333" fill-opacity="0.48"/><rect x="30" y="128" width="1" height="1.6" fill="#333333" fill-opacity="0.48"/><rect x="8" y="130" width="1" height="1.6" fill="#333333" fill-opacity="0.48"/><rect x="8" y="134" width="6" height="1.6" fill="#4B69C6" fill-opacity="0.50"/><rect x="15" y="134" width="8" height="1.6" fill="#7A3E9D" fill-opacity="0.50"/><rect x="24" y="134" width="17" height="1.6" fill="#AA3731" fill-opacity="0.50"/><rect x="41" y="134" width="1" height="1.6" fill="#333333" fill-opacity="0.48"/><rect x="42" y="134" width="5" height="1.6" fill="#333333" fill-opacity="0.48"/><rect x="47" y="134" width="1" height="1.6" fill="#333333" fill-opacity="0.48"/><rect x="48" y="134" width="13" height="1.6" fill="#7A3E9D" fill-opacity="0.50"/><rect x="61" y="134" width="1" height="1.6" fill="#333333" fill-opacity="0.48"/><rect x="62" y="134" width="1" height="1.6" fill="#333333" fill-opacity="0.48"/><rect x="63" y="134" width="4" height="1.6" fill="#7A3E9D" fill-opacity="0.50"/><rect x="68" y="134" width="1" height="1.6" fill="#333333" fill-opacity="0.48"/><rect x="12" y="136" width="5" height="1.6" fill="#333333" fill-opacity="0.48"/><rect x="17" y="136" width="1" height="1.6" fill="#333333" fill-opacity="0.48"/><rect x="18" y="136" width="15" height="1.6" fill="#333333" fill-opacity="0.48"/><rect x="33" y="136" width="1" height="1.6" fill="#333333" fill-opacity="0.48"/><rect x="34" y="136" width="5" height="1.6" fill="#333333" fill-opacity="0.48"/><rect x="39" y="136" width="1" height="1.6" fill="#333333" fill-opacity="0.48"/><rect x="40" y="136" width="1" height="1.6" fill="#333333" fill-opacity="0.48"/><rect x="8" y="138" width="1" height="1.6" fill="#333333" fill-opacity="0.48"/><rect x="8" y="142" width="6" height="1.6" fill="#4B69C6" fill-opacity="0.50"/><rect x="15" y="142" width="8" height="1.6" fill="#7A3E9D" fill-opacity="0.50"/><rect x="24" y="142" width="16" height="1.6" fill="#AA3731" fill-opacity="0.50"/><rect x="40" y="142" width="1" height="1.6" fill="#333333" fill-opacity="0.48"/><rect x="41" y="142" width="5" height="1.6" fill="#333333" fill-opacity="0.48"/><rect x="46" y="142" width="1" height="1.6" fill="#333333" fill-opacity="0.48"/><rect x="47" y="142" width="13" height="1.6" fill="#7A3E9D" fill-opacity="0.50"/><rect x="60" y="142" width="1" height="1.6" fill="#333333" fill-opacity="0.48"/><rect x="61" y="142" width="1" height="1.6" fill="#333333" fill-opacity="0.48"/><rect x="62" y="142" width="4" height="1.6" fill="#7A3E9D" fill-opacity="0.50"/><rect x="67" y="142" width="1" height="1.6" fill="#333333" fill-opacity="0.48"/><rect x="12" y="144" width="5" height="1.6" fill="#333333" fill-opacity="0.48"/><rect x="17" y="144" width="1" height="1.6" fill="#333333" fill-opacity="0.48"/><rect x="18" y="144" width="10" height="1.6" fill="#333333" fill-opacity="0.48"/><rect x="28" y="144" width="1" height="1.6" fill="#333333" fill-opacity="0.48"/><rect x="29" y="144" width="5" height="1.6" fill="#333333" fill-opacity="0.48"/><rect x="34" y="144" width="1" height="1.6" fill="#333333" fill-opacity="0.48"/><rect x="35" y="144" width="1" height="1.6" fill="#333333" fill-opacity="0.48"/><rect x="8" y="146" width="1" height="1.6" fill="#333333" fill-opacity="0.48"/><rect x="4" y="148" width="1" height="1.6" fill="#333333" fill-opacity="0.48"/><rect x="0" y="150" width="1" height="1.6" fill="#333333" fill-opacity="0.48"/></svg>
<div class="ln" style="top:22px">19</div><div class="ln" style="top:40px">20</div><div class="ln" style="top:58px">21</div><div class="ln" style="top:76px">22</div><div class="ln" style="top:94px">23</div><div class="ln" style="top:112px">24</div><div class="ln" style="top:130px">25</div><div class="ln" style="top:148px">26</div><div class="ln" style="top:166px">27</div><div class="ln" style="top:184px">28</div><div class="ln" style="top:202px">29</div><div class="ln" style="top:220px">30</div><div class="ln" style="top:238px">31</div><div class="ln" style="top:256px">32</div><div class="ln" style="top:274px">33</div><div class="ln" style="top:292px">34</div><div class="ln" style="top:310px">35</div><div class="ln" style="top:328px">36</div><div class="ln" style="top:346px">37</div><div class="ln" style="top:364px">38</div><div class="ln" style="top:382px">39</div><div class="ln" style="top:400px">40</div><div class="ln" style="top:418px">41</div><div class="ln" style="top:436px">42</div><div class="ln" style="top:454px">43</div><div class="ln" style="top:472px">44</div><div class="ln" style="top:490px">45</div><div class="ln" style="top:508px">46</div><div class="ln" style="top:526px">47</div><div class="ln" style="top:544px">48</div><div class="ln" style="top:562px">49</div><div class="ln" style="top:580px">50</div><div class="ln" style="top:598px">51</div><div class="ln" style="top:616px">52</div>
<div class="ig" style="left:237px;top:40px;height:594px"></div><div class="ig" style="left:266px;top:184px;height:450px"></div><div class="ig" style="left:295px;top:256px;height:72px"></div><div class="ig" style="left:324px;top:256px;height:54px"></div><div class="ig" style="left:295px;top:382px;height:36px"></div><div class="ig" style="left:295px;top:436px;height:90px"></div><div class="ig" style="left:295px;top:580px;height:54px"></div>
<div class="cl" style="top:22px"><span style="color:#4B69C6">package</span> sample.todo.controllers {</div><div class="cl" style="top:40px">    <span style="color:#4B69C6">import</span> org.apache.royale.core.<span style="color:#7A3E9D">Application</span>;</div><div class="cl" style="top:58px">    <span style="color:#4B69C6">import</span> org.apache.royale.core.<span style="color:#7A3E9D">IDocument</span>;</div><div class="cl" style="top:76px">    <span style="color:#4B69C6">import</span> org.apache.royale.events.<span style="color:#7A3E9D">Event</span>;</div><div class="cl" style="top:94px"></div><div class="cl" style="top:112px">    <span style="color:#4B69C6">import</span> sample.todo.events.<span style="color:#7A3E9D">TodoListEvent</span>;</div><div class="cl" style="top:130px">    <span style="color:#4B69C6">import</span> sample.todo.models.<span style="color:#7A3E9D">TodoListModel</span>;</div><div class="cl" style="top:148px"></div><div class="cl" style="top:166px">    <span style="color:#4B69C6">public</span> <span style="color:#7A3E9D">class</span> TodoListController <span style="color:#4B69C6">implements</span> <span style="color:#7A3E9D;font-weight:bold">IDocument</span> {</div><div class="cl" style="top:184px"></div><div class="cl" style="top:202px">        <span style="color:#4B69C6">private</span> <span style="color:#7A3E9D">var</span> model:<span style="color:#7A3E9D">TodoListModel</span>;</div><div class="cl" style="top:220px"></div><div class="cl" style="top:238px">        <span style="color:#4B69C6">public</span> <span style="color:#7A3E9D">function</span> <span style="color:#AA3731;font-weight:bold">TodoListController</span>(<span style="color:#7A3E9D">app:Application</span> = <span style="color:#AB6526">null</span>) {</div><div class="cl" style="top:256px">             <span style="color:#4B69C6">if</span> (app <span style="color:#777777">!=</span> <span style="color:#AB6526">null</span>) {</div><div class="cl" style="top:274px">                <span style="color:#AAAAAA;font-style:italic">// store the model for future use.</span></div><div class="cl" style="top:292px">                model = app.model <span style="color:#4B69C6">as</span> <span style="color:#7A3E9D">TodoListModel</span>;</div><div class="cl" style="top:310px">            }</div><div class="cl" style="top:328px">        }</div><div class="cl" style="top:346px"></div><div class="cl" style="top:364px">        <span style="color:#448C27">/<svg class="ast" width="7.2" height="7" viewBox="0 0 7.2 7"><path d="M0.7,3.5 L6.5,3.5 M2,0.9 L5.2,6.1 M5.2,0.9 L2,6.1" stroke="#448C27" stroke-width="1.15" fill="none"/></svg><svg class="ast" width="7.2" height="7" viewBox="0 0 7.2 7"><path d="M0.7,3.5 L6.5,3.5 M2,0.9 L5.2,6.1 M5.2,0.9 L2,6.1" stroke="#448C27" stroke-width="1.15" fill="none"/></svg></span></div><div class="cl" style="top:382px">         <span style="color:#448C27"><svg class="ast" width="7.2" height="7" viewBox="0 0 7.2 7"><path d="M0.7,3.5 L6.5,3.5 M2,0.9 L5.2,6.1 M5.2,0.9 L2,6.1" stroke="#448C27" stroke-width="1.15" fill="none"/></svg></span></div><div class="cl" style="top:400px">         <span style="color:#448C27"><svg class="ast" width="7.2" height="7" viewBox="0 0 7.2 7"><path d="M0.7,3.5 L6.5,3.5 M2,0.9 L5.2,6.1 M5.2,0.9 L2,6.1" stroke="#448C27" stroke-width="1.15" fill="none"/></svg>/</span></div><div class="cl" style="top:418px">        <span style="color:#4B69C6">public</span> <span style="color:#7A3E9D">function</span> <span style="color:#AA3731;font-weight:bold">setDocument</span>(<span style="color:#7A3E9D">document:Object</span>, <span style="color:#7A3E9D">id:String</span> = <span style="color:#AB6526">null</span>):<span style="color:#7A3E9D">void</span> {</div><div class="cl" style="top:436px">            <span style="color:#7A3E9D">var</span> app:<span style="color:#7A3E9D">Application</span> = document <span style="color:#4B69C6">as</span> <span style="color:#7A3E9D">Application</span>;</div><div class="cl" style="top:454px">            app.addEventListener(<span style="color:#448C27">&quot;viewChanged&quot;</span>, viewChangeHandler);</div><div class="cl" style="top:472px"></div><div class="cl" style="top:490px">            <span style="color:#AAAAAA;font-style:italic">// store the model for future use</span></div><div class="cl" style="top:508px">            model = app.model <span style="color:#4B69C6">as</span> <span style="color:#7A3E9D">TodoListModel</span>;</div><div class="cl" style="top:526px">        }</div><div class="cl" style="top:544px"></div><div class="cl" style="top:562px">        <span style="color:#448C27">/<svg class="ast" width="7.2" height="7" viewBox="0 0 7.2 7"><path d="M0.7,3.5 L6.5,3.5 M2,0.9 L5.2,6.1 M5.2,0.9 L2,6.1" stroke="#448C27" stroke-width="1.15" fill="none"/></svg><svg class="ast" width="7.2" height="7" viewBox="0 0 7.2 7"><path d="M0.7,3.5 L6.5,3.5 M2,0.9 L5.2,6.1 M5.2,0.9 L2,6.1" stroke="#448C27" stroke-width="1.15" fill="none"/></svg></span></div><div class="cl" style="top:580px">         <span style="color:#448C27"><svg class="ast" width="7.2" height="7" viewBox="0 0 7.2 7"><path d="M0.7,3.5 L6.5,3.5 M2,0.9 L5.2,6.1 M5.2,0.9 L2,6.1" stroke="#448C27" stroke-width="1.15" fill="none"/></svg></span></div><div class="cl" style="top:598px">         <span style="color:#448C27"><svg class="ast" width="7.2" height="7" viewBox="0 0 7.2 7"><path d="M0.7,3.5 L6.5,3.5 M2,0.9 L5.2,6.1 M5.2,0.9 L2,6.1" stroke="#448C27" stroke-width="1.15" fill="none"/></svg> </span><span style="color:#4B69C6;font-style:italic">@param</span> <span style="color:#448C27;font-style:italic">event</span></div><div class="cl" style="top:616px">         <span style="color:#448C27"><svg class="ast" width="7.2" height="7" viewBox="0 0 7.2 7"><path d="M0.7,3.5 L6.5,3.5 M2,0.9 L5.2,6.1 M5.2,0.9 L2,6.1" stroke="#448C27" stroke-width="1.15" fill="none"/></svg>/</span></div>
<div id="side">
  <div class="hdr" style="top:21px"><span style="left:-89px">EDITORES ABIERTOS</span></div>
  <div class="row isel" style="top:43px"><span class="t" style="left:-53px;font-style:italic;letter-spacing:0.4px">TodoListController.as</span><span class="t" style="left:83px;font-style:italic;font-size:12px;color:#888;letter-spacing:0.15px">src/main/royal…</span></div>
  <div class="hdr" style="top:65px"><span style="left:-88px">TODOLISTSAMPLEAPP</span></div>
  <div class="row" style="top:131px"><span class="t" style="left:-12px">org</span></div>
  <div class="row" style="top:153px"><span class="t" style="left:-31px">royale</span></div>
  <div class="row" style="top:175px"><span class="t" style="left:-19px">sample</span></div>
  <div class="row" style="top:197px"><span class="t" style="left:-5px">todo</span></div>
  <div class="row" style="top:219px"><span class="t" style="left:5px">controllers</span></div>
  <div class="row sel" style="top:241px"><svg class="ic" style="left:-5px;top:5px" width="15" height="12" viewBox="0 0 15 12" fill="none" stroke="#cf3a42" stroke-width="1.1"><path d="M3.2,0.6 Q1.8,0.6 1.8,2 L1.8,4.6 Q1.8,5.8 0.6,5.8 Q1.8,5.8 1.8,7 L1.8,9.6 Q1.8,11 3.2,11 M3.6,8.4 L5.6,2.6 L7.6,8.4 M4.3,6.6 L6.9,6.6 M11,3.4 Q10.6,2.6 9.6,2.6 Q8.3,2.6 8.3,4 Q8.3,5.1 9.6,5.4 Q11,5.7 11,7 Q11,8.5 9.5,8.5 Q8.5,8.5 8.1,7.7 M11.8,0.6 Q13.2,0.6 13.2,2 L13.2,4.6 Q13.2,5.8 14.4,5.8 Q13.2,5.8 13.2,7 L13.2,9.6 Q13.2,11 11.8,11"/></svg><span class="t" style="left:18px">TodoListController.as</span></div>
  <div class="row" style="top:263px"><span class="t" style="left:5px">events</span></div>
  <div class="row" style="top:285px"><svg class="ic" style="left:-5px;top:5px" width="15" height="12" viewBox="0 0 15 12" fill="none" stroke="#cf3a42" stroke-width="1.1"><path d="M3.2,0.6 Q1.8,0.6 1.8,2 L1.8,4.6 Q1.8,5.8 0.6,5.8 Q1.8,5.8 1.8,7 L1.8,9.6 Q1.8,11 3.2,11 M3.6,8.4 L5.6,2.6 L7.6,8.4 M4.3,6.6 L6.9,6.6 M11,3.4 Q10.6,2.6 9.6,2.6 Q8.3,2.6 8.3,4 Q8.3,5.1 9.6,5.4 Q11,5.7 11,7 Q11,8.5 9.5,8.5 Q8.5,8.5 8.1,7.7 M11.8,0.6 Q13.2,0.6 13.2,2 L13.2,4.6 Q13.2,5.8 14.4,5.8 Q13.2,5.8 13.2,7 L13.2,9.6 Q13.2,11 11.8,11"/></svg><span class="t" style="left:18px">TodoListEvent.as</span></div>
  <div class="row" style="top:307px"><span class="t" style="left:5px">models</span></div>
  <div class="row" style="top:329px"><svg class="ic" style="left:-5px;top:5px" width="15" height="12" viewBox="0 0 15 12" fill="none" stroke="#cf3a42" stroke-width="1.1"><path d="M3.2,0.6 Q1.8,0.6 1.8,2 L1.8,4.6 Q1.8,5.8 0.6,5.8 Q1.8,5.8 1.8,7 L1.8,9.6 Q1.8,11 3.2,11 M3.6,8.4 L5.6,2.6 L7.6,8.4 M4.3,6.6 L6.9,6.6 M11,3.4 Q10.6,2.6 9.6,2.6 Q8.3,2.6 8.3,4 Q8.3,5.1 9.6,5.4 Q11,5.7 11,7 Q11,8.5 9.5,8.5 Q8.5,8.5 8.1,7.7 M11.8,0.6 Q13.2,0.6 13.2,2 L13.2,4.6 Q13.2,5.8 14.4,5.8 Q13.2,5.8 13.2,7 L13.2,9.6 Q13.2,11 11.8,11"/></svg><span class="t" style="left:18px">TodoListModel.as</span></div>
  <div class="row" style="top:351px"><span class="t" style="left:5px">renderers</span></div>
  <div class="row" style="top:373px"><svg class="ic" style="left:-5px;top:4px" width="14" height="15" viewBox="0 0 14 15" fill="#f7f7f7" stroke="#c6c6c6" stroke-width="1"><path d="M0.5,0.5 L9.5,0.5 L13,4 L13,14 L0.5,14 Z"/><path d="M9.5,0.5 L9.5,4 L13,4" fill="#d0d0d0"/></svg><span class="t" style="left:18px">TodoItemRenderer.mxml</span></div>
  <div class="row" style="top:395px"><span class="t" style="left:5px">views</span></div>
  <div class="row" style="top:417px"><svg class="ic" style="left:-5px;top:4px" width="14" height="15" viewBox="0 0 14 15" fill="#f7f7f7" stroke="#c6c6c6" stroke-width="1"><path d="M0.5,0.5 L9.5,0.5 L13,4 L13,14 L0.5,14 Z"/><path d="M9.5,0.5 L9.5,4 L13,4" fill="#d0d0d0"/></svg><span class="t" style="left:18px">TodoListView.mxml</span></div>
  <div class="row" style="top:439px"><span class="t" style="left:-19px">TodoListSampleApp.mxml</span></div>
  <div style="position:absolute;left:0;top:467px;width:1px;height:10px;background:#dfe6ee"></div>
  <div class="hdr" style="top:482px"><span style="left:-86px">ACTIONSCRIPT SOURCE PATH</span></div>
  <div class="row" style="top:504px"><span class="t" style="left:-82px">No source paths in asconfig.json</span></div>
</div>
</div>
<div id="status">
  <svg style="left:-4px;top:6px" width="9" height="11" viewBox="0 0 9 11" fill="none" stroke="#fff" stroke-width="1.6"><path d="M4.5,1 L4.5,9 M1.2,5.8 L4.5,9 L7.8,5.8"/></svg>
  <span style="left:9px">0</span>
  <svg style="left:17px;top:6px" width="9" height="11" viewBox="0 0 9 11" fill="none" stroke="#fff" stroke-width="1.6"><path d="M4.5,9.5 L4.5,1.5 M1.2,4.8 L4.5,1.5 L7.8,4.8"/></svg>
  <svg style="left:39px;top:5px" width="12" height="12" viewBox="0 0 12 12"><circle cx="6" cy="6" r="5.6" fill="#fff"/><path d="M3.7,3.7 L8.3,8.3 M8.3,3.7 L3.7,8.3" stroke="#705697" stroke-width="1.9"/></svg>
  <span style="left:55px">0</span>
  <svg style="left:67px;top:5px" width="12" height="12" viewBox="0 0 12 12"><path d="M6,0.5 L11.8,11.2 L0.2,11.2 Z" fill="#fff"/><path d="M6,4 L6,8" stroke="#705697" stroke-width="1.3"/><circle cx="6" cy="9.6" r="0.7" fill="#705697"/></svg>
  <span style="left:82px">0</span>
  <span style="left:385px;letter-spacing:0">Lín. 1, Col. 1</span>
  <span style="left:468px">Tamaño de tabulación: 4</span>
  <span style="left:623px">UTF-8</span>
  <span style="left:675px">LF</span>
  <span style="left:703px;letter-spacing:0.55px">ActionScript</span>
  <svg style="left:788px;top:5px" width="13" height="12" viewBox="0 0 13 12"><path d="M6.5,0.5 L12.8,11.5 L0.2,11.5 Z" fill="#fff"/><path d="M6.5,4 L6.5,8.2" stroke="#705697" stroke-width="1.4"/><circle cx="6.5" cy="9.8" r="0.75" fill="#705697"/></svg>
  <span style="left:806px;letter-spacing:0">No SDK</span>
  <svg style="left:864px;top:4px" width="15" height="15" viewBox="0 0 15 15"><circle cx="7.5" cy="7.5" r="7.2" fill="#fff"/><circle cx="5" cy="5.3" r="1.1" fill="#705697"/><circle cx="10" cy="5.3" r="1.1" fill="#705697"/><path d="M3.5,8.5 Q7.5,12.5 11.5,8.5" fill="none" stroke="#705697" stroke-width="1.3"/></svg>
</div>
</div>
</body></html>
